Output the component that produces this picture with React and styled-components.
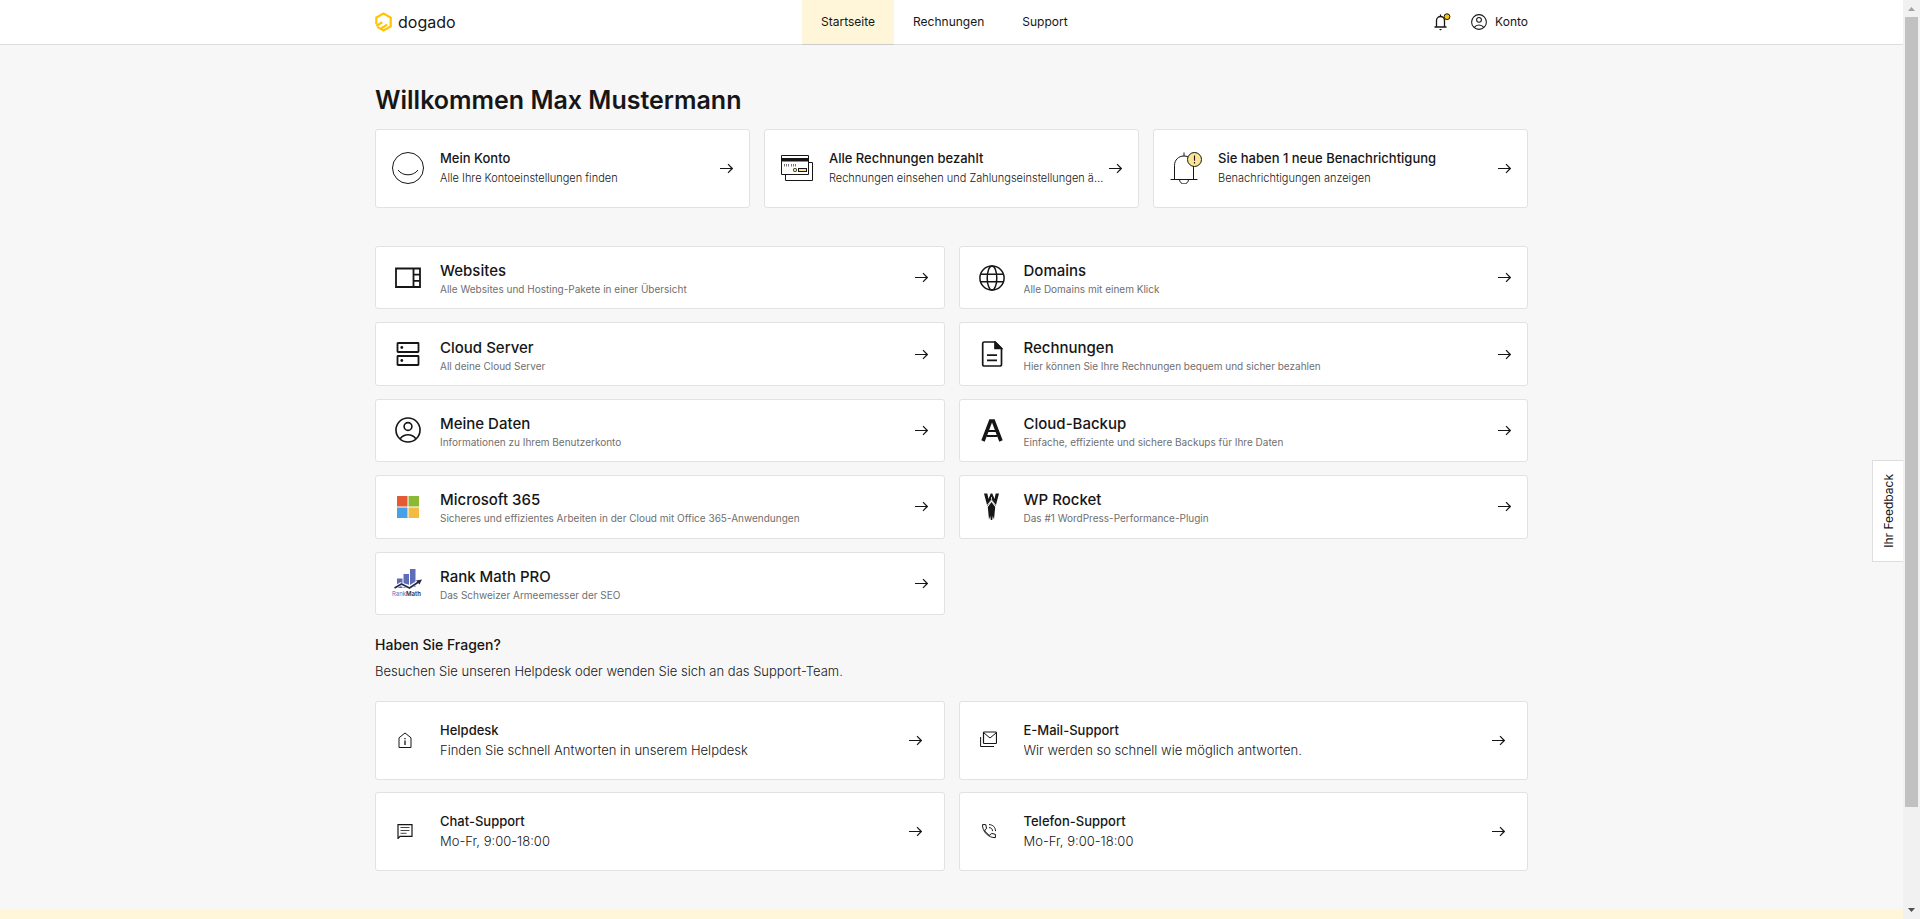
import React from "react";
import styled, { createGlobalStyle, css } from "styled-components";

const color = {
  ink: "#161616",
  muted: "#6f6f6f",
  line: "#e2e2e2",
  page: "#f7f7f7",
  cream: "#fff6da",
  yellow: "#ffc400",
};

const GlobalStyle = createGlobalStyle`
  *, *::before, *::after { box-sizing: border-box; }
  body {
    margin: 0;
    background: ${color.page};
    color: ${color.ink};
    font-family: Inter, "Liberation Sans", sans-serif;
    font-size: 13px;
    line-height: 20px;
  }
  a { color: inherit; text-decoration: none; }
  svg { display: block; flex: none; }
`;

const Page = styled.div`
  min-height: 100vh;
  padding-right: 17px;
  display: flex;
  flex-direction: column;
`;

const container = css`
  width: 100%;
  max-width: 1153px;
  margin: 0 auto;
`;

const Header = styled.header`
  background: #fff;
  border-bottom: 1px solid #dedede;
`;

const HeaderInner = styled.div`
  ${container}
  height: 44px;
  display: flex;
  justify-content: space-between;
  align-items: center;
`;

const Logo = styled.a`
  display: flex;
  align-items: center;
  gap: 6px;
  font-size: 16px;
`;

const Nav = styled.nav`
  display: flex;
  align-self: stretch;
  margin-bottom: -1px;
`;

const NavLink = styled.a`
  display: flex;
  align-items: center;
  padding: 0 19px;
  font-size: 12px;
  border-bottom: 1px solid ${(p) => (p.$active ? "#cbcbcb" : "transparent")};
  background: ${(p) => (p.$active ? color.cream : "transparent")};
`;

const Tools = styled.div`
  display: flex;
  align-items: center;
  gap: 20px;
`;

const IconButton = styled.button`
  display: flex;
  padding: 0;
  border: 0;
  background: none;
  cursor: pointer;
`;

const AccountLink = styled.a`
  display: flex;
  align-items: center;
  gap: 8px;
  font-size: 12px;
`;

const Main = styled.main`
  ${container}
  padding: 39px 0 38px;
`;

const Heading = styled.h1`
  margin: 0 0 13px;
  font-size: 25px;
  line-height: 32px;
  font-weight: 600;
`;

const SubHeading = styled.h2`
  margin: 20px 0 6px;
  font-size: 14px;
  font-weight: 500;
`;

const Lead = styled.p`
  margin: 0 0 20px;
  font-weight: 300;
`;

const HighlightGrid = styled.div`
  display: grid;
  grid-template-columns: repeat(3, minmax(0, 1fr));
  gap: 14px;
  margin-bottom: 38px;
`;

const ServiceGrid = styled.div`
  display: grid;
  grid-template-columns: repeat(2, minmax(0, 1fr));
  grid-auto-rows: 1fr;
  gap: 13px 14px;
  min-height: 369px;
`;

const SupportGrid = styled.div`
  display: grid;
  grid-template-columns: repeat(2, minmax(0, 1fr));
  gap: 12px 14px;
`;

const Card = styled.a`
  display: flex;
  align-items: center;
  background: #fff;
  border: 1px solid ${color.line};
  border-radius: 3px;
`;

const HighlightCard = styled(Card)`
  padding: 18px 16px;
  gap: 16px;
`;

const ServiceCard = styled(Card)`
  padding: 10px 16px;
  gap: 16px;
`;

const SupportCard = styled(Card)`
  padding: 18px 22px 18px 21px;
  gap: 27px;
`;

const IconSlot = styled.span`
  display: flex;
  justify-content: center;
  flex: none;
  width: ${(p) => p.$width}px;
  padding-bottom: ${(p) => (p.$raised ? 2 : 0)}px;
`;

const CardBody = styled.span`
  display: flex;
  flex: 1;
  min-width: 0;
  align-items: center;
  gap: 4px;
`;

const CardText = styled.span`
  display: flex;
  flex-direction: column;
  flex: 1;
  min-width: 0;
  padding-top: ${(p) => (p.$compact ? 4 : 0)}px;
`;

const Title = styled.span`
  font-size: ${(p) => p.$size}px;
  line-height: 20px;
  font-weight: 500;
`;

const Note = styled.span`
  font-size: ${(p) => p.$size}px;
  line-height: ${(p) => (p.$muted ? 17 : 21)}px;
  font-weight: ${(p) => (p.$muted ? 400 : 300)};
  color: ${(p) => (p.$muted ? color.muted : color.ink)};
  white-space: nowrap;
  overflow: hidden;
  text-overflow: ellipsis;
`;

const Footer = styled.footer`
  flex: 1;
  min-height: 10px;
  background: ${color.cream};
`;

const FeedbackTab = styled.button`
  position: fixed;
  right: 17px;
  top: 460px;
  width: 31px;
  height: 102px;
  display: flex;
  align-items: center;
  justify-content: center;
  padding: 0;
  background: #fff;
  border: 1px solid #dedede;
  border-right: 0;
  color: ${color.ink};
  font-family: inherit;
  font-size: 12px;
  font-weight: 400;
`;

const Vertical = styled.span`
  writing-mode: vertical-rl;
  rotate: 180deg;
`;

const ScrollRail = styled.div`
  position: fixed;
  top: 0;
  right: 0;
  bottom: 0;
  width: 17px;
  display: flex;
  flex-direction: column;
  background: #f1f1f1;
`;

const ScrollTrack = styled.div`
  flex: 1;
  min-height: 0;
  padding: 0 2px;
`;

const ScrollThumb = styled.div`
  height: calc(100% - 95px);
  background: #c1c1c1;
`;

const Stroke = ({ size = 26, box = 24, width = 1, children }) => (
  <svg width={size} height={size} viewBox={`0 0 ${box} ${box}`} fill="none" stroke={color.ink} strokeWidth={width} aria-hidden="true">
    {children}
  </svg>
);

const Arrow = () => (
  <svg width="13" height="11" viewBox="0 0 13 11" fill="none" stroke={color.ink} strokeWidth="1.2" aria-hidden="true">
    <path d="M0 5.5h12.2M8 1.200l4.300 4.300L8 9.800" />
  </svg>
);

const LogoMark = () => (
  <svg width="17" height="20" viewBox="0 0 17 20" fill="none" stroke={color.yellow} strokeWidth="2.2" aria-hidden="true">
    <path d="M1.3 12.2V5.6L8.5 1.5l7.2 4.1v8.8l-7.2 4.1-6.2-3.6M1.3 13.9l6-3.6M6.4 16.2l5.8-3.6" />
  </svg>
);

const BellIcon = () => (
  <svg width="18" height="18" viewBox="0 0 18 18" fill="none" stroke={color.ink} strokeWidth="1.3" aria-hidden="true">
    <path d="M1.500 14h12M3.500 14V7.500a4 4 0 0 1 8 0V14M7.500 3.500V1.500" />
    <path d="M6 16h3l-1.500 1.500z" fill={color.ink} stroke="none" />
    <circle cx="14" cy="3.700" r="2.900" fill={color.yellow} strokeWidth="1" />
  </svg>
);

const UserIcon = ({ size = 26, width = 1.5 }) => (
  <Stroke size={size} width={width}>
    <circle cx="12" cy="12" r="11.100" />
    <circle cx="12" cy="8.800" r="3.600" />
    <path d="M4.800 20c1.800-2.300 4.300-3.600 7.200-3.600s5.400 1.300 7.200 3.600" />
  </Stroke>
);

const SmileIcon = () => (
  <Stroke size={32} box={32} width={1}>
    <circle cx="16" cy="16" r="15.500" />
    <path d="M6 18c2.400 3.200 5.900 4.800 10 4.800s7.600-1.600 10-4.800" />
  </Stroke>
);

const CardsIcon = () => (
  <Stroke size={32} box={32} width={1}>
    <path d="M4.500 10.500h27v18h-27z" fill="#fff" />
    <path d="M.5 3.500h27v19h-27z" fill="#fff" />
    <path d="M1 6h26v3.500H1z" fill={color.ink} stroke="none" />
    <path d="M3.500 12v2.500M5.500 12v2.500M7.500 12v2.500M10.500 12v2.500M12.500 12v2.500M14.500 12v2.500" stroke="#777" />
    <rect x="12.500" y="16.500" width="3" height="3" rx="1" fill="#fde493" />
    <rect x="17.500" y="16.500" width="8" height="3" fill="#fde493" />
  </Stroke>
);

const AlertBellIcon = () => (
  <Stroke size={32} box={32} width={1}>
    <path d="M.5 27.500h27M4.500 27.500V13.500c0-5.500 4-9.500 9.500-9.500s9.500 4 9.500 9.500v14M14 4V.5" />
    <path d="M9.500 27.500a4.500 4.500 0 0 0 9 0" />
    <circle cx="24.500" cy="7.500" r="7" fill="#fde493" />
    <path d="M24.500 3.500v5.200M24.500 10v1.500" strokeWidth="1.100" />
  </Stroke>
);

const WebsiteIcon = () => (
  <Stroke size={26} box={26} width={1.8}>
    <path d="M1 3.500h24v18.500H1zM18.500 3.500V22M18.500 9.700H25M18.500 15.800H25" />
  </Stroke>
);

const GlobeIcon = () => (
  <Stroke size={26} box={26} width={1.5}>
    <circle cx="13" cy="13" r="12.100" />
    <ellipse cx="13" cy="13" rx="4.800" ry="12.100" />
    <path d="M2 9.200h22M2 16.800h22" />
  </Stroke>
);

const ServerIcon = () => (
  <Stroke size={26} box={26} width={1.8}>
    <rect x="2.500" y="2" width="21" height="9" rx=".5" />
    <rect x="2.500" y="15" width="21" height="9" rx=".5" />
    <circle cx="6.800" cy="6.500" r="1.400" fill={color.ink} stroke="none" />
    <circle cx="6.800" cy="19.500" r="1.400" fill={color.ink} stroke="none" />
  </Stroke>
);

const InvoiceIcon = () => (
  <Stroke size={26} box={26} width={1.7}>
    <path d="M5.200 1h11L22.500 7.300V23.500a1.500 1.500 0 0 1-1.500 1.500H5.200a1.500 1.500 0 0 1-1.500-1.500V2.500A1.500 1.500 0 0 1 5.200 1" />
    <path d="M16 1.200v6.300h6.300z" fill={color.ink} />
    <path d="M8 14.200h10M8 19.300h10" />
  </Stroke>
);

const BackupIcon = () => (
  <Stroke size={26} box={26} width={3.6}>
    <path d="M4 24 11.600 4h2.800L22 24" />
    <path d="M9 14h8M7.500 19h11" strokeWidth="2" />
  </Stroke>
);

const MicrosoftIcon = () => (
  <svg width="22" height="22" viewBox="0 0 22 22" aria-hidden="true">
    <path d="M0 0h10.500v10.500H0z" fill="#e35b36" />
    <path d="M11.500 0H22v10.500H11.500z" fill="#8bb936" />
    <path d="M0 11.500h10.500V22H0z" fill="#46a2e8" />
    <path d="M11.500 11.500H22V22H11.500z" fill="#f5bb41" />
  </svg>
);

const RocketIcon = () => (
  <svg width="15" height="27" viewBox="0 0 15 27" aria-hidden="true">
    <path d="M0 .5h3.300l1.200 5.500L6.700.5h1.600L10.500 6 11.700.5H15L11.700 13 7.500 7.200 3.300 13z" fill={color.ink} />
    <path d="M7.500 9l3.700 5-1.200 12.500-1.200-3.500-.6 4H6.800L6.200 23 5 26.500 3.800 14z" fill={color.ink} />
    <path d="M3.300 12.200 7.500 6.800l4.200 5.400M7.500 6.800V4" fill="none" stroke="#fff" strokeWidth=".8" />
  </svg>
);

const RankMathIcon = () => (
  <svg width="32" height="28" viewBox="0 0 32 28" aria-hidden="true">
    <path d="M5 9.500h5.500V19H5zM11.500 5h5.500v14h-5.500zM18 0h5.500v18H18z" fill="#5f6db8" />
    <path d="M2.500 18.700l6.200-3.500 9.300 2.800 9-5.500" fill="none" stroke="#fff" strokeWidth="3.500" />
    <path d="M2.500 19l7-4 8 4 9-6" fill="none" stroke="#262b45" strokeWidth="1.700" />
    <path d="M24 11.500l6-1-2.500 5z" fill="#262b45" />
    <text x="0" y="27" fontFamily="Inter, sans-serif" fontSize="6" fontWeight="600" fill="#262b45">
      <tspan fill="#5f6db8" fontWeight="400">Rank</tspan>Math
    </text>
  </svg>
);

const HelpIcon = () => (
  <Stroke size={16} box={16}>
    <path d="M2 15.500V5.800L8 1l6 4.800v9.700z" />
    <path d="M8 8.500v4.500M8 6v1.200" strokeWidth="1.300" />
  </Stroke>
);

const MailIcon = () => (
  <Stroke size={17} box={17}>
    <rect x="3.500" y="1" width="13" height="11.500" rx=".8" strokeWidth="1.200" />
    <path d="M4 2l6 5 6-5" />
    <path d="M.6 6v9.500H14" />
  </Stroke>
);

const ChatIcon = () => (
  <Stroke size={16} box={16} width={1.2}>
    <path d="M1 15.500V1.600h14v11.800H3z" />
    <path d="M3.500 4.500h9M3.500 7.500h9M3.500 10.300h6" strokeWidth=".8" />
  </Stroke>
);

const PhoneIcon = () => (
  <Stroke size={16} box={16} width={1}>
    <path d="M1.500 1.600h3.300l.8 3.900-2 1.500c1.100 2.500 2.800 4.200 5.300 5.400l1.600-2 3.900.9v3.300C7.500 15 1.200 8.500 1.500 1.600z" />
    <path d="M8 1.600c3.800 0 6.500 2.700 6.500 6.500M8 4.600c2.200 0 3.500 1.300 3.500 3.500" />
  </Stroke>
);

const highlights = [
  { icon: SmileIcon, title: "Mein Konto", note: "Alle Ihre Kontoeinstellungen finden" },
  { icon: CardsIcon, title: "Alle Rechnungen bezahlt", note: "Rechnungen einsehen und Zahlungseinstellungen ändern" },
  { icon: AlertBellIcon, title: "Sie haben 1 neue Benachrichtigung", note: "Benachrichtigungen anzeigen" },
];

const services = [
  { icon: WebsiteIcon, title: "Websites", note: "Alle Websites und Hosting-Pakete in einer Übersicht" },
  { icon: GlobeIcon, title: "Domains", note: "Alle Domains mit einem Klick" },
  { icon: ServerIcon, title: "Cloud Server", note: "All deine Cloud Server" },
  { icon: InvoiceIcon, title: "Rechnungen", note: "Hier können Sie Ihre Rechnungen bequem und sicher bezahlen" },
  { icon: UserIcon, title: "Meine Daten", note: "Informationen zu Ihrem Benutzerkonto" },
  { icon: BackupIcon, title: "Cloud-Backup", note: "Einfache, effiziente und sichere Backups für Ihre Daten" },
  { icon: MicrosoftIcon, title: "Microsoft 365", note: "Sicheres und effizientes Arbeiten in der Cloud mit Office 365-Anwendungen" },
  { icon: RocketIcon, title: "WP Rocket", note: "Das #1 WordPress-Performance-Plugin" },
  { icon: RankMathIcon, title: "Rank Math PRO", note: "Das Schweizer Armeemesser der SEO" },
];

const support = [
  { icon: HelpIcon, title: "Helpdesk", note: "Finden Sie schnell Antworten in unserem Helpdesk" },
  { icon: MailIcon, title: "E-Mail-Support", note: "Wir werden so schnell wie möglich antworten." },
  { icon: ChatIcon, title: "Chat-Support", note: "Mo-Fr, 9:00-18:00" },
  { icon: PhoneIcon, title: "Telefon-Support", note: "Mo-Fr, 9:00-18:00" },
];

function Tile({ shell: Shell, item, slot, titleSize, noteSize, muted }) {
  const Icon = item.icon;
  return (
    <Shell href="#">
      <IconSlot $width={slot} $raised={!muted}>
        <Icon />
      </IconSlot>
      <CardBody>
        <CardText $compact={muted}>
          <Title $size={titleSize}>{item.title}</Title>
          <Note $size={noteSize} $muted={muted}>{item.note}</Note>
        </CardText>
        <Arrow />
      </CardBody>
    </Shell>
  );
}

export default function App() {
  return (
    <>
      <GlobalStyle />
      <Page>
        <Header>
          <HeaderInner>
            <Logo href="#">
              <LogoMark />
              dogado
            </Logo>
            <Nav>
              <NavLink href="#" $active>Startseite</NavLink>
              <NavLink href="#">Rechnungen</NavLink>
              <NavLink href="#">Support</NavLink>
            </Nav>
            <Tools>
              <IconButton type="button" aria-label="Benachrichtigungen">
                <BellIcon />
              </IconButton>
              <AccountLink href="#">
                <UserIcon size={16} width={1.6} />
                Konto
              </AccountLink>
            </Tools>
          </HeaderInner>
        </Header>
        <Main>
          <Heading>Willkommen Max Mustermann</Heading>
          <HighlightGrid>
            {highlights.map((item) => (
              <Tile key={item.title} shell={HighlightCard} item={item} slot={32} titleSize={13} noteSize={11} />
            ))}
          </HighlightGrid>
          <ServiceGrid>
            {services.map((item) => (
              <Tile key={item.title} shell={ServiceCard} item={item} slot={32} titleSize={15} noteSize={10} muted />
            ))}
          </ServiceGrid>
          <SubHeading>Haben Sie Fragen?</SubHeading>
          <Lead>Besuchen Sie unseren Helpdesk oder wenden Sie sich an das Support-Team.</Lead>
          <SupportGrid>
            {support.map((item) => (
              <Tile key={item.title} shell={SupportCard} item={item} slot={16} titleSize={13} noteSize={13} />
            ))}
          </SupportGrid>
        </Main>
        <Footer />
      </Page>
      <FeedbackTab type="button">
        <Vertical>Ihr Feedback</Vertical>
      </FeedbackTab>
      <ScrollRail aria-hidden="true">
        <svg width="17" height="17" viewBox="0 0 17 17">
          <path d="M5 11h7L8.500 7z" fill="#a3a3a3" />
        </svg>
        <ScrollTrack>
          <ScrollThumb />
        </ScrollTrack>
        <svg width="17" height="17" viewBox="0 0 17 17">
          <path d="M5 6h7L8.500 10z" fill="#505050" />
        </svg>
      </ScrollRail>
    </>
  );
}
